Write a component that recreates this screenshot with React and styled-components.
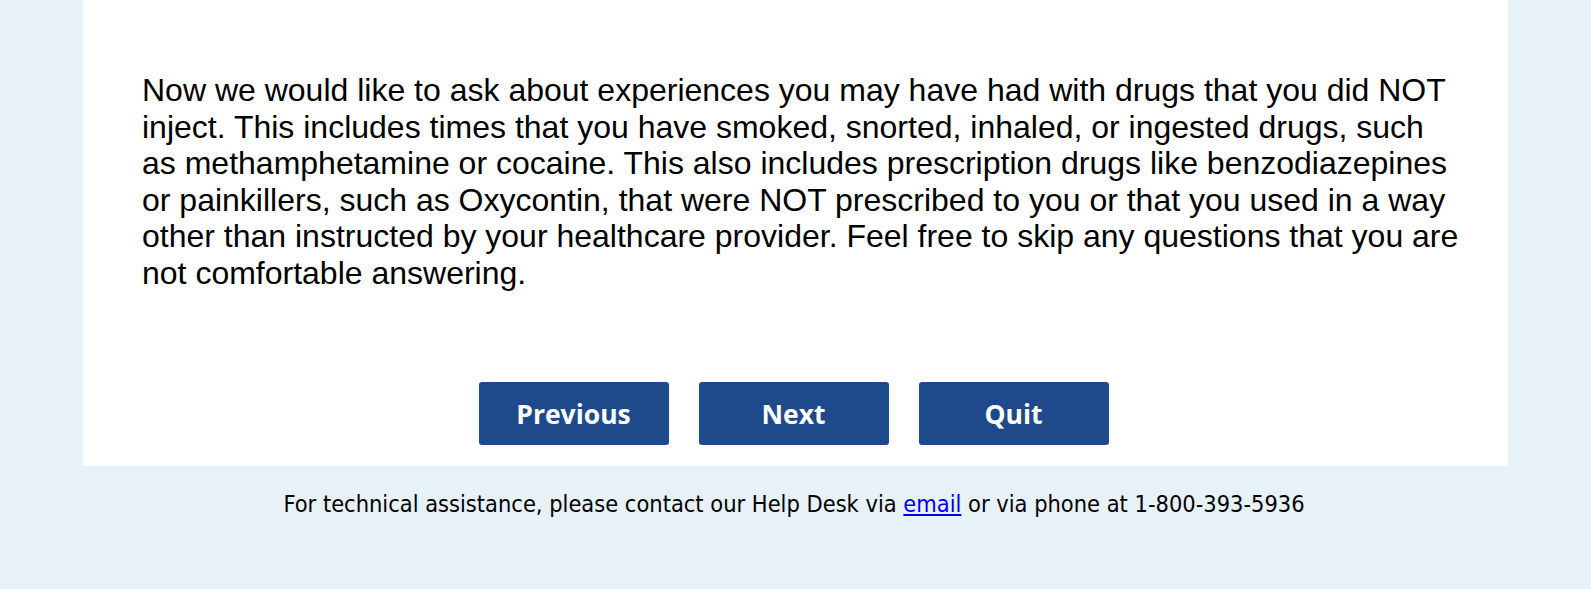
import React from "react";
import styled, { createGlobalStyle } from "styled-components";

const GlobalStyle = createGlobalStyle`
  html, body {
    margin: 0;
    padding: 0;
    background: #e6f1f8;
  }
  body {
    font-family: "Liberation Sans", Arial, sans-serif;
  }
`;

const Page = styled.div`
  min-height: 589px;
  background: #e6f1f8;
`;

const Panel = styled.main`
  width: 1425px;
  margin: 0 auto;
  background: #ffffff;
  box-sizing: border-box;
  padding: 72px 0 21px 0;
`;

const Intro = styled.p`
  margin: 0;
  padding: 0 44px 0 59px;
  font-family: "Liberation Sans", Arial, sans-serif;
  font-size: 32px;
  line-height: 36.6px;
  color: #000;
`;

const ButtonRow = styled.div`
  display: flex;
  justify-content: center;
  gap: 30px;
  margin-top: 90px;
  padding-right: 4px;
`;

const NavButton = styled.button`
  width: 190px;
  height: 63px;
  border: none;
  border-radius: 3px;
  background: #1e4a8c;
  color: #ffffff;
  font-family: "Open Sans", sans-serif;
  font-weight: 700;
  font-size: 26.5px;
  cursor: pointer;
  padding: 2px 0 0 0;
`;

const Footer = styled.footer`
  text-align: center;
  padding: 24px 3px 0 0;
  font-family: "DejaVu Sans Condensed", "DejaVu Sans", sans-serif;
  font-size: 23.4px;
  line-height: 28px;
  color: #000;
`;

const Link = styled.a`
  color: #0000ee;
  text-decoration: underline;
`;

export default function App() {
  return (
    <Page>
      <GlobalStyle />
      <Panel>
        <Intro>
          Now we would like to ask about experiences you may have had with drugs that you did NOT
          inject. This includes times that you have smoked, snorted, inhaled, or ingested drugs, such
          as methamphetamine or cocaine. This also includes prescription drugs like benzodiazepines
          or painkillers, such as Oxycontin, that were NOT prescribed to you or that you used in a way
          other than instructed by your healthcare provider. Feel free to skip any questions that you are
          not comfortable answering.
        </Intro>
        <ButtonRow>
          <NavButton>Previous</NavButton>
          <NavButton>Next</NavButton>
          <NavButton>Quit</NavButton>
        </ButtonRow>
      </Panel>
      <Footer>
        For technical assistance, please contact our Help Desk via <Link href="#">email</Link> or via phone at 1-800-393-5936
      </Footer>
    </Page>
  );
}
